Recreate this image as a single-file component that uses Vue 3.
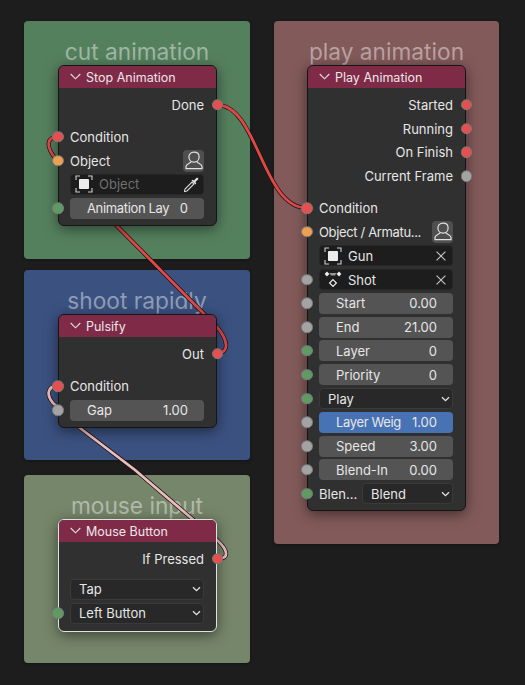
<script setup>
const frames = [
  { title: 'cut animation', left: 24, top: 21, width: 226, height: 238, color: '#55805e' },
  { title: 'shoot rapidly', left: 24, top: 270, width: 226, height: 190, color: '#3b5180' },
  { title: 'mouse input', left: 24, top: 475, width: 226, height: 188, color: '#76866a' },
  { title: 'play animation', left: 274, top: 21, width: 225, height: 523, color: '#835a5a' },
]

const red = '#e64f4f'
const orange = '#eda04f'
const green = '#5f9a63'
const grey = '#a3a3a3'

const nodes = [
  {
    title: 'Stop Animation', left: 58, top: 65, pad: 4.7,
    outputs: [{ label: 'Done', socket: red }],
    gap: 8.2,
    inputs: [
      { kind: 'text', label: 'Condition', socket: red },
      { kind: 'text', label: 'Object', socket: orange, person: true },
      { kind: 'id', label: 'Object', icon: 'object', tail: 'picker', muted: true },
      { kind: 'num', label: 'Animation Lay', value: '0', socket: green, tight: true },
    ],
  },
  {
    title: 'Pulsify', left: 58, top: 314, pad: 4.7,
    outputs: [{ label: 'Out', socket: red }],
    gap: 8.7,
    inputs: [
      { kind: 'text', label: 'Condition', socket: red },
      { kind: 'num', label: 'Gap', value: '1.00', socket: grey },
    ],
  },
  {
    title: 'Mouse Button', left: 58, top: 519, pad: 5.7, selected: true,
    outputs: [{ label: 'If Pressed', socket: red }],
    gap: 6.7,
    inputs: [
      { kind: 'select', value: 'Tap' },
      { kind: 'select', value: 'Left Button', socket: green },
    ],
  },
  {
    title: 'Play Animation', left: 307, top: 65, pad: 4.7,
    outputs: [
      { label: 'Started', socket: red },
      { label: 'Running', socket: red },
      { label: 'On Finish', socket: red },
      { label: 'Current Frame', socket: grey },
    ],
    gap: 8.2,
    inputs: [
      { kind: 'text', label: 'Condition', socket: red },
      { kind: 'text', label: 'Object / Armatu...', socket: orange, person: true, tight: true },
      { kind: 'id', label: 'Gun', icon: 'object', tail: 'x' },
      { kind: 'id', label: 'Shot', icon: 'action', tail: 'x', socket: grey },
      { kind: 'num', label: 'Start', value: '0.00', socket: grey },
      { kind: 'num', label: 'End', value: '21.00', socket: grey },
      { kind: 'num', label: 'Layer', value: '0', socket: green },
      { kind: 'num', label: 'Priority', value: '0', socket: green },
      { kind: 'select', value: 'Play', socket: green },
      { kind: 'num', label: 'Layer Weig', value: '1.00', socket: grey, active: true, tight: true },
      { kind: 'num', label: 'Speed', value: '3.00', socket: grey },
      { kind: 'num', label: 'Blend-In', value: '0.00', socket: grey },
      { kind: 'select', label: 'Blen...', value: 'Blend', socket: green },
    ],
  },
]

const redWires = [
  'M217 105 C258 105 262 208 307 208',
  'M217 353 C230 353 228 340 217 327 L117 226 L55 158 C47 148 45 137 58 137',
]
const pinkWire = 'M217 559 C230 559 228 550 217 540 L135 470 L80 428 L53 403 C47 396 46 386 58 386'
</script>

<template>
  <div class="editor">
    <section
      v-for="f in frames"
      :key="f.title"
      class="frame"
      :style="{ left: f.left + 'px', top: f.top + 'px', width: f.width + 'px', height: f.height + 'px', background: f.color }"
    >
      <h2 class="frame-title">{{ f.title }}</h2>
    </section>

    <svg class="wires" width="525" height="685" viewBox="0 0 525 685" fill="none">
      <path v-for="d in redWires" :key="d" :d="d" stroke="#141414" stroke-width="4.2" />
      <path v-for="d in redWires" :key="d + 'c'" :d="d" stroke="#e04848" stroke-width="2.8" />
      <path :d="pinkWire" stroke="#141414" stroke-width="4.2" />
      <path :d="pinkWire" stroke="#eebcbc" stroke-width="2.8" />
    </svg>

    <article
      v-for="n in nodes"
      :key="n.title"
      class="node"
      :class="{ selected: n.selected }"
      :style="{ left: n.left + 'px', top: n.top + 'px', paddingBottom: n.pad + 'px' }"
    >
      <header class="node-head">
        <svg class="head-chevron" width="11" height="7" viewBox="0 0 11 7" fill="none">
          <path d="M0.7 1 L5.5 5.8 L10.3 1" stroke="#e4dde0" stroke-width="1.1" />
        </svg>
        <span>{{ n.title }}</span>
      </header>

      <div class="node-body">
        <div class="outputs" :style="{ marginBottom: n.gap + 'px' }">
          <div v-for="o in n.outputs" :key="o.label" class="row out">
            <span>{{ o.label }}</span>
            <i class="socket socket-right" :style="{ background: o.socket }"></i>
          </div>
        </div>

        <div v-for="r in n.inputs" :key="r.kind + (r.label || '') + (r.value || '')" class="row">
          <i v-if="r.socket" class="socket socket-left" :style="{ background: r.socket }"></i>

          <template v-if="r.kind === 'text'">
            <span class="grow" :class="{ tight: r.tight }">{{ r.label }}</span>
            <span v-if="r.person" class="person">
              <svg width="18" height="19" viewBox="0 0 18 19" fill="none" stroke="#e2e2e2" stroke-width="1.2">
                <path d="M9 1.2 C5.6 1.2 3.9 3.4 3.9 6 C3.9 8.8 5.9 11.2 9 11.2 C12.1 11.2 14.1 8.8 14.1 6 C14.1 3.4 12.4 1.2 9 1.2 Z" />
                <path d="M6.2 10.4 C6 12.6 1 12.6 1 15.5 V17.6 H17 V15.5 C17 12.6 12 12.6 11.8 10.4" />
              </svg>
            </span>
          </template>

          <div v-else-if="r.kind === 'id'" class="field id">
            <svg v-if="r.icon === 'object'" class="id-icon" width="18" height="18" viewBox="0 0 18 18" fill="none">
              <path d="M1 5 V1 H5 M13 1 H17 V5 M17 13 V17 H13 M5 17 H1 V13" stroke="#cfcfcf" stroke-width="1.1" />
              <rect x="4" y="4" width="10" height="10" rx="0.8" fill="#ececec" />
            </svg>
            <svg v-else class="id-icon" width="18" height="18" viewBox="0 0 18 18" fill="none">
              <path d="M3 0.6 L5.4 3 L3 5.4 L0.6 3 Z" fill="#eee" />
              <path d="M15 0.6 L17.4 3 L15 5.4 L12.6 3 Z" fill="#eee" />
              <path d="M5 2 H13 L11.4 3.4 V4.6 H6.6 V3.4 Z" fill="#9a9a9a" />
              <path d="M9 8.6 L12.4 12 L9 15.4 L5.6 12 Z" stroke="#eee" stroke-width="1.2" />
            </svg>
            <span class="grow id-label" :class="{ muted: r.muted }">{{ r.label }}</span>
            <svg v-if="r.tail === 'x'" class="tail" width="10" height="10" viewBox="0 0 10 10" fill="none">
              <path d="M0.6 0.6 L9.4 9.4 M9.4 0.6 L0.6 9.4" stroke="#c8c8c8" stroke-width="1.1" />
            </svg>
            <svg v-else class="tail picker" width="17" height="17" viewBox="0 0 17 17" fill="none">
              <path d="M1.5 15.5 L2 13 L9 6 L11 8 L4 15 Z" stroke="#d8d8d8" stroke-width="1.1" />
              <path d="M8.5 4.5 L12.5 8.5 L13.2 7.2 L12.4 6 L15 3.6 C16 2.4 14.6 1 13.4 2 L11 4.6 L9.8 3.8 Z" fill="#e4e4e4" />
            </svg>
          </div>

          <div v-else-if="r.kind === 'num'" class="field num" :class="{ active: r.active }">
            <span class="grow clip" :class="{ tight: r.tight }">{{ r.label }}</span>
            <span>{{ r.value }}</span>
          </div>

          <template v-else>
            <span v-if="r.label" class="select-label">{{ r.label }}</span>
            <div class="field select">
              <span class="grow">{{ r.value }}</span>
              <svg width="9" height="6" viewBox="0 0 9 6" fill="none">
                <path d="M1 1.2 L4.5 4.7 L8 1.2" stroke="#e2e2e2" stroke-width="1.3" />
              </svg>
            </div>
          </template>
        </div>
      </div>
    </article>
  </div>
</template>

<style>
html, body { margin: 0; background: #1d1d1d; }
</style>

<style scoped>
.editor {
  position: relative;
  width: 525px;
  height: 685px;
  overflow: hidden;
  background: #1d1d1d;
  font-family: Inter, "Noto Sans", sans-serif;
  font-size: 13px;
  color: #e6e6e6;
}
.frame {
  position: absolute;
  box-sizing: border-box;
  border-radius: 4px;
  box-shadow: 0 1px 3px rgba(0, 0, 0, 0.35);
}
.frame-title {
  margin: 17px 0 0;
  font-size: 22.7px;
  font-weight: 400;
  line-height: 28px;
  text-align: center;
  color: rgba(255, 255, 255, 0.44);
}
.wires {
  position: absolute;
  left: 0;
  top: 0;
}
.node {
  position: absolute;
  box-sizing: border-box;
  width: 159px;
  border: 1px solid #151515;
  border-radius: 6px;
  background: #303030;
  box-shadow: 0 3px 14px rgba(0, 0, 0, 0.5);
}
.node.selected {
  border-color: #e0e0e0;
}
.node-head {
  display: flex;
  align-items: center;
  gap: 5px;
  height: 22px;
  padding-left: 11px;
  border-radius: 5px 5px 0 0;
  background: #7f2b48;
  color: #ece6e8;
  font-size: 12.5px;
}
.head-chevron {
  margin-top: -2px;
}
.node-body {
  padding: 4.9px 12px 0 11px;
}
.row {
  position: relative;
  display: flex;
  align-items: center;
  gap: 5px;
  height: 23.8px;
  white-space: nowrap;
}
.out {
  justify-content: flex-end;
}
.grow {
  flex: 1;
  min-width: 0;
}
.tight {
  letter-spacing: -0.35px;
}
.socket {
  position: absolute;
  top: 50%;
  width: 9.5px;
  height: 9.5px;
  border: 1.5px solid #7a7a7a;
  border-radius: 50%;
  transform: translateY(-50%);
}
.socket-left {
  left: -18px;
}
.socket-right {
  right: -19px;
}
.person {
  display: flex;
  align-items: center;
  justify-content: center;
  width: 21px;
  height: 22px;
  border-radius: 4px;
  background: #4f4f4f;
}
.field {
  flex: 1;
  min-width: 0;
  box-sizing: border-box;
  display: flex;
  align-items: center;
  height: 21px;
  border-radius: 4px;
}
.num {
  padding: 0 16px 0 17px;
  background: #545454;
  gap: 4px;
}
.num.active {
  background: #4772b3;
}
.clip {
  overflow: hidden;
}
.id {
  padding: 0 6px 0 3.5px;
  background: #1d1d1d;
  border: 1px solid #262626;
}
.id-icon {
  flex: none;
  margin-right: 6.5px;
}
.id-label.muted {
  color: #6f6f6f;
}
.tail {
  flex: none;
}
.picker {
  margin-right: -3px;
}
.select {
  padding: 0 2px 0 8px;
  background: #282828;
  border: 1px solid #3a3a3a;
}
.select-label {
  flex: none;
  width: 38px;
}
</style>
